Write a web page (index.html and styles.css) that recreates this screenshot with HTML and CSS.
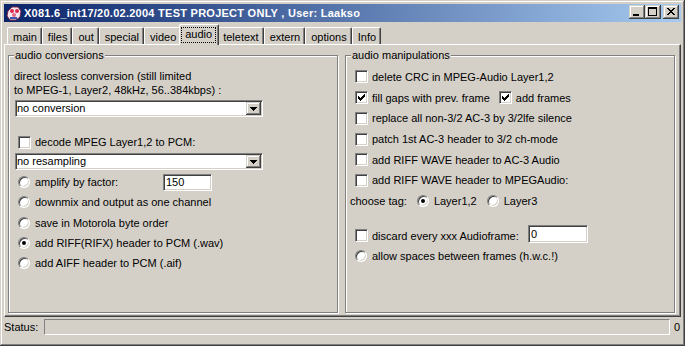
FILE: index.html
```html
<!DOCTYPE html>
<html>
<head>
<meta charset="utf-8">
<link rel="stylesheet" href="styles.css">
</head>
<body>

<div class="window">
  <div class="titlebar">
    <svg class="appicon" viewBox="0 0 16 16">
      <path d="M2 6 L6 2 L12 2 L15 6 L14 12 L10 15 L4 15 L1 11 Z" fill="#f6e8f0" stroke="#7a2848"/>
      <circle cx="6" cy="6" r="2" fill="#d8284e"/>
      <circle cx="11" cy="6" r="2" fill="#d8284e"/>
      <circle cx="8" cy="10" r="2" fill="#e86a88"/>
      <rect x="4" y="12" width="7" height="2" fill="#3a58b0"/>
    </svg>
    <span class="title">X081.6_int17/20.02.2004 TEST PROJECT ONLY , User: Laakso</span>
    <div class="capbtns">
      <div class="capbtn"><svg viewBox="0 0 16 14"><rect x="4" y="9" width="6" height="2"/></svg></div>
      <div class="capbtn"><svg viewBox="0 0 16 14"><path fill-rule="evenodd" d="M3 2h9v9H3z M4 4v6h7V4z"/></svg></div>
      <div class="capbtn close"><svg viewBox="0 0 16 14"><path d="M4 3h2v1H4z M10 3h2v1h-2z M5 4h2v1H5z M9 4h2v1H9z M6 5h4v1H6z M7 6h2v1H7z M6 7h4v1H6z M5 8h2v1H5z M9 8h2v1H9z M4 9h2v1H4z M10 9h2v1h-2z"/></svg></div>
    </div>
  </div>

  <div class="tabs">
    <div class="tab">main</div>
    <div class="tab">files</div>
    <div class="tab">out</div>
    <div class="tab">special</div>
    <div class="tab">video</div>
    <div class="tab selected"><span class="focus">audio</span></div>
    <div class="tab">teletext</div>
    <div class="tab">extern</div>
    <div class="tab">options</div>
    <div class="tab">Info</div>
  </div>

  <div class="pane">
    <fieldset class="group conv">
      <legend>audio conversions</legend>
      <div class="line first">direct losless conversion (still limited</div>
      <div class="line">to MPEG-1, Layer2, 48kHz, 56..384kbps) :</div>
      <div class="combo">
        <span class="combo-text">no conversion</span>
        <span class="combo-btn"><svg width="7" height="4" viewBox="0 0 7 4"><path d="M0 0h7v1H0z M1 1h5v1H1z M2 2h3v1H2z M3 3h1v1H3z"/></svg></span>
      </div>
      <div class="row decode"><span class="check"></span><span class="lbl">decode MPEG Layer1,2 to PCM:</span></div>
      <div class="combo second">
        <span class="combo-text">no resampling</span>
        <span class="combo-btn"><svg width="7" height="4" viewBox="0 0 7 4"><path d="M0 0h7v1H0z M1 1h5v1H1z M2 2h3v1H2z M3 3h1v1H3z"/></svg></span>
      </div>
      <div class="radios">
        <div class="row"><span class="radio"></span><span class="lbl amp">amplify by factor:</span><span class="field amp-field">150</span></div>
        <div class="row"><span class="radio"></span><span class="lbl">downmix and output as one channel</span></div>
        <div class="row"><span class="radio"></span><span class="lbl">save in Motorola byte order</span></div>
        <div class="row"><span class="radio on"></span><span class="lbl">add RIFF(RIFX) header to PCM (.wav)</span></div>
        <div class="row"><span class="radio"></span><span class="lbl">add AIFF header to PCM (.aif)</span></div>
      </div>
    </fieldset>

    <fieldset class="group manip">
      <legend>audio manipulations</legend>
      <div class="row first"><span class="check"></span><span class="lbl">delete CRC in MPEG-Audio Layer1,2</span></div>
      <div class="row">
        <span class="check"><svg width="7" height="7" viewBox="0 0 7 7"><path d="M0 2h1v3H0z M1 3h1v3H1z M2 4h1v3H2z M3 3h1v3H3z M4 2h1v3H4z M5 1h1v3H5z M6 0h1v3H6z"/></svg></span><span class="lbl">fill gaps with prev. frame</span>
        <span class="check extra"><svg width="7" height="7" viewBox="0 0 7 7"><path d="M0 2h1v3H0z M1 3h1v3H1z M2 4h1v3H2z M3 3h1v3H3z M4 2h1v3H4z M5 1h1v3H5z M6 0h1v3H6z"/></svg></span><span class="lbl">add frames</span>
      </div>
      <div class="row"><span class="check"></span><span class="lbl">replace all non-3/2 AC-3 by 3/2lfe silence</span></div>
      <div class="row"><span class="check"></span><span class="lbl">patch 1st AC-3 header to 3/2 ch-mode</span></div>
      <div class="row"><span class="check"></span><span class="lbl">add RIFF WAVE header to AC-3 Audio</span></div>
      <div class="row"><span class="check"></span><span class="lbl">add RIFF WAVE header to MPEGAudio:</span></div>
      <div class="row tag">
        <span>choose tag:</span>
        <span class="radio on gap"></span><span class="lbl">Layer1,2</span>
        <span class="radio gap"></span><span class="lbl">Layer3</span>
      </div>
      <div class="row discard"><span class="check"></span><span class="lbl disc">discard every xxx Audioframe:</span><span class="field disc-field">0</span></div>
      <div class="row"><span class="radio"></span><span class="lbl">allow spaces between frames (h.w.c.!)</span></div>
    </fieldset>
  </div>

  <div class="status">
    <span class="status-label">Status:</span>
    <span class="status-field"></span>
    <span class="status-num">0</span>
  </div>
</div>

</body>
</html>
```

FILE: styles.css
```css
* {
  box-sizing: border-box;
}

body {
  margin: 0;
  background: #d4d0c8;
  font-family: "Liberation Sans", Arial, sans-serif;
  font-size: 11px;
  color: #000;
}

/* window frame */
.window {
  width: 685px;
  height: 346px;
  padding: 4px;
  display: flex;
  flex-direction: column;
  background: #d4d0c8;
  box-shadow: inset -1px -1px #404040, inset 1px 1px #d4d0c8, inset -2px -2px #808080, inset 2px 2px #fff;
}

.titlebar {
  height: 18px;
  flex: none;
  display: flex;
  align-items: center;
  padding-left: 2px;
  background: linear-gradient(to right, #0a246a, #a6caf0);
  color: #fff;
}

.appicon {
  width: 16px;
  height: 16px;
  flex: none;
}

.title {
  flex: 1;
  margin-left: 2px;
  font-weight: bold;
  letter-spacing: 0.26px;
  white-space: nowrap;
}

.capbtns {
  display: flex;
  align-self: flex-start;
  margin-top: 1px;
  margin-right: 2px;
}

.capbtn {
  width: 16px;
  height: 14px;
  background: #d4d0c8;
  box-shadow: inset -1px -1px #404040, inset 1px 1px #d4d0c8, inset -2px -2px #808080, inset 2px 2px #fff;
}

.capbtn svg {
  display: block;
  width: 16px;
  height: 14px;
  shape-rendering: crispEdges;
}

.capbtn.close {
  margin-left: 2px;
}

/* tabs */
.tabs {
  height: 22px;
  flex: none;
  display: flex;
  align-items: flex-start;
  padding-left: 3px;
}

.tab {
  margin-top: 5px;
  height: 17px;
  padding: 3px 4px 0 5px;
  border: 1px solid;
  border-bottom: 0;
  border-color: #fff #404040 #fff #fff;
  border-radius: 2px 2px 0 0;
  box-shadow: inset -1px 0 #808080;
  line-height: 13px;
  white-space: nowrap;
}

.tab.selected {
  position: relative;
  z-index: 1;
  margin: 2px -2px 0;
  height: 21px;
  padding: 2px 2px 0 1px;
  background: #d4d0c8;
}

.focus {
  display: block;
  border: 1px dotted #000;
  padding: 0 3px 1px;
  line-height: 13px;
}

/* tab page */
.pane {
  height: 273px;
  flex: none;
  display: grid;
  grid-template-columns: 330px 330px;
  column-gap: 7px;
  padding: 4px 5px 3px 3px;
  border: 1px solid;
  border-color: #fff #404040 #404040 #fff;
  box-shadow: inset -1px -1px #808080;
}

.group {
  margin: 0;
  min-width: 0;
  padding: 0 5px;
  border: 1px solid #808080;
  box-shadow: inset 1px 1px #fff, 1px 1px #fff;
}

.group legend {
  padding: 0 1px;
  line-height: 13px;
  background: #d4d0c8;
}

.line {
  line-height: 14px;
  white-space: nowrap;
}

.line.first {
  margin-top: 7px;
}

.row {
  display: flex;
  align-items: center;
  height: 20.25px;
  padding-left: 4px;
  white-space: nowrap;
}

.lbl {
  margin-left: 4px;
}

.radio + .lbl {
  margin-left: 5px;
}

.row.decode {
  height: 20px;
  margin-top: 15px;
}

.radios {
  margin-top: 2px;
}

.manip .row {
  height: 20.7px;
}

.manip .row.first {
  margin-top: 4.6px;
}

.manip .row.tag {
  padding-left: 0;
  margin-left: -1px;
}

.manip .row.discard {
  margin-top: 14px;
}

.check.extra {
  margin-left: 9px;
}

.radio.gap {
  margin-left: 10px;
}

/* controls */
.check {
  width: 13px;
  height: 13px;
  flex: none;
  display: flex;
  align-items: center;
  justify-content: center;
  background: #fff;
  border: 1px solid;
  border-color: #808080 #fff #fff #808080;
  box-shadow: inset 1px 1px #404040, inset -1px -1px #d4d0c8;
}

.check svg {
  display: block;
  shape-rendering: crispEdges;
}

.radio {
  width: 12px;
  height: 12px;
  flex: none;
  display: flex;
  align-items: center;
  justify-content: center;
  border-radius: 50%;
  background: #fff;
  border: 1px solid;
  border-color: #808080 #fff #fff #808080;
  box-shadow: inset 1px 1px #404040, inset -1px -1px #d4d0c8;
}

.radio.on::after {
  content: "";
  width: 4px;
  height: 4px;
  border-radius: 50%;
  background: #000;
}

.combo {
  display: flex;
  width: 248px;
  height: 17px;
  margin-top: 3px;
  margin-left: 1px;
  padding: 1px;
  background: #fff;
  border: 1px solid;
  border-color: #808080 #fff #fff #808080;
  box-shadow: inset 1px 1px #404040, inset -1px -1px #d4d0c8;
}

.combo.second {
  margin-top: 1px;
}

.combo-text {
  flex: 1;
  line-height: 13px;
}

.combo-btn {
  width: 15px;
  height: 13px;
  display: flex;
  align-items: center;
  justify-content: center;
  background: #d4d0c8;
  box-shadow: inset -1px -1px #404040, inset 1px 1px #d4d0c8, inset -2px -2px #808080, inset 2px 2px #fff;
}

.combo-btn svg {
  display: block;
  shape-rendering: crispEdges;
}

.field {
  height: 17px;
  padding: 0 2px;
  line-height: 15px;
  background: #fff;
  border: 1px solid;
  border-color: #808080 #fff #fff #808080;
  box-shadow: inset 1px 1px #404040, inset -1px -1px #d4d0c8;
}

.lbl.amp {
  width: 128px;
}

.amp-field {
  width: 49px;
}

.lbl.disc {
  width: 156px;
}

.disc-field {
  width: 60px;
  height: 18px;
  line-height: 16px;
  margin-bottom: 4px;
}

/* status bar */
.status {
  height: 25px;
  flex: none;
  display: flex;
  align-items: flex-start;
  padding-top: 2px;
}

.status-label {
  line-height: 16px;
}

.status-field {
  flex: 1;
  height: 16px;
  margin-left: 6px;
  border: 1px solid;
  border-color: #808080 #fff #fff #808080;
}

.status-num {
  margin: 0 1px 0 4px;
  line-height: 16px;
}
```
